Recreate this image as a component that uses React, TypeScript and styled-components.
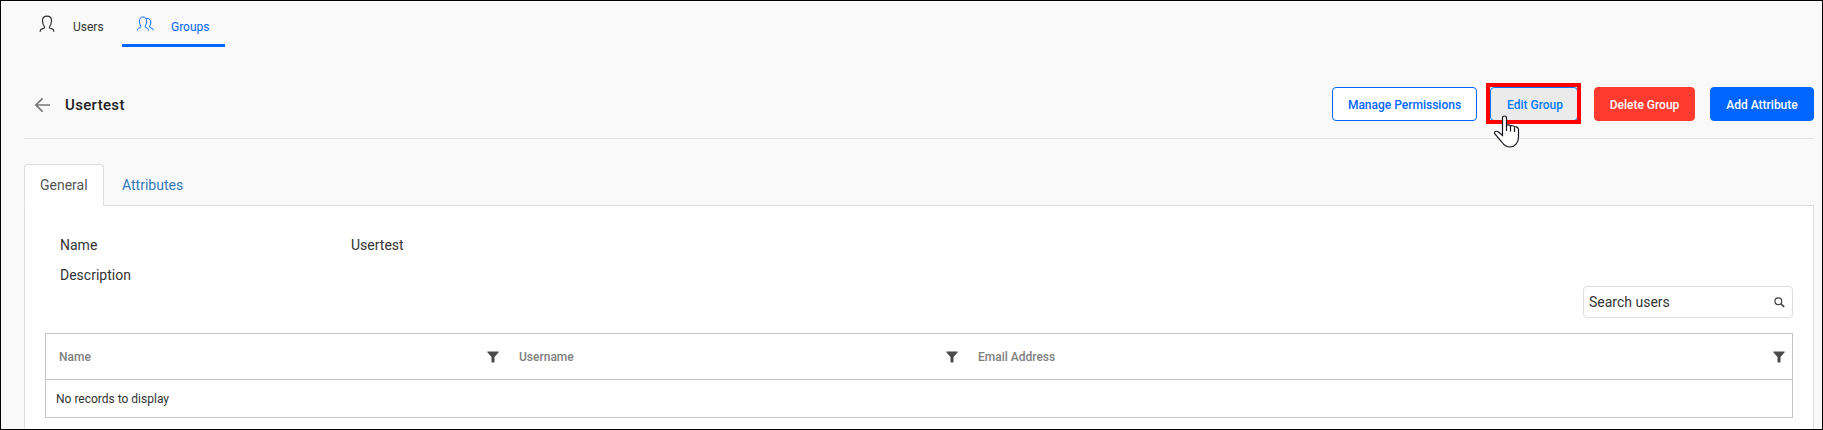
import React from 'react';
import styled, { createGlobalStyle, css } from 'styled-components';

const GlobalStyle = createGlobalStyle`
  *, *::before, *::after { box-sizing: border-box; }
  body { margin: 0; font-family: Roboto, "Liberation Sans", sans-serif; color: #333; }
`;

const Page = styled.div`
  height: 430px;
  overflow: hidden;
  border: 1px solid #000;
  background: #f9f9f9;
  padding: 0 8px 0 23px;
  display: flex;
  flex-direction: column;
`;

const TopNav = styled.nav`
  display: flex;
  height: 46px;
  flex: none;
`;

const NavItem = styled.a<{ $active?: boolean }>`
  display: flex;
  align-items: center;
  height: 46px;
  font-size: 12px;
  line-height: 16px;
  color: ${p => (p.$active ? '#0066ff' : '#333')};
  border-bottom: 3px solid ${p => (p.$active ? '#0066ff' : 'transparent')};
  width: ${p => (p.$active ? '103px' : '98px')};
  padding: 9px 0 0 15px;

  svg { margin: -6px ${p => (p.$active ? '17px' : '18px')} 0 0; flex: none; }
`;

const Header = styled.header`
  display: flex;
  align-items: center;
  height: 92px;
  flex: none;
  padding: 22px 0 0 10px;
  border-bottom: 1px solid #e0e0e0;

  > svg { flex: none; margin-top: 3px; }
`;

const Title = styled.h1`
  margin: 2px auto 0 14px;
  font-size: 15px;
  line-height: 20px;
  font-weight: 500;
  letter-spacing: 0.35px;
  color: #222;
`;

const variants = {
  outline: css`background: #fff; color: #0066ff; border-color: #0066ff;`,
  hover: css`background: #ebebeb; color: #007bff; border-color: #007bff;`,
  danger: css`background: #ff3b30; color: #fff; border-color: #ff3b30;`,
  primary: css`background: #0066ff; color: #fff; border-color: #0066ff;`,
};

const Button = styled.button<{ $variant: keyof typeof variants; $width: number }>`
  font: 500 12px/16px Roboto, "Liberation Sans", sans-serif;
  flex: none;
  width: ${p => p.$width}px;
  height: 34px;
  margin: 4px 0 0;
  padding: 2px 0 0;
  border: 1px solid;
  border-radius: 4px;
  white-space: nowrap;
  ${p => variants[p.$variant]}
`;

const Actions = styled.div`
  display: flex;
  align-items: flex-start;
  gap: 13px;
  height: 41px;

  > :last-child { margin-left: 2px; }
`;

const Highlight = styled.div`
  position: relative;
  display: flex;
  height: 41px;
  width: 95px;
  margin: 0 0 0 -4px;

  &::after {
    content: '';
    position: absolute;
    inset: 0;
    border: 4px solid #ff0000;
  }

  > button { margin: 4px 0 0 4px; padding-left: 2px; }
`;

const Cursor = styled.svg`
  position: absolute;
  z-index: 1;
  left: 7px;
  top: 32px;
`;

const Tabs = styled.div`
  display: flex;
  flex: none;
  margin-top: 25px;
  height: 42px;
  border-bottom: 1px solid #ddd;
`;

const Tab = styled.a<{ $active?: boolean }>`
  height: 42px;
  padding: 10px 15px 0;
  font-size: 14px;
  line-height: 20px;
  border: 1px solid transparent;
  border-radius: 4px 4px 0 0;
  color: #337ab7;
  margin-right: 2px;
  ${p =>
    p.$active &&
    css`
      width: 80px;
      color: #555;
      background: #fff;
      border-color: #ddd #ddd #fff;
    `}
`;

const Panel = styled.section`
  flex: 1;
  background: #fff;
  border: solid #ddd;
  border-width: 0 1px;
  padding: 24px 20px 0;
`;

const Field = styled.div`
  display: grid;
  grid-template-columns: 291px 1fr;
  height: 30px;
  padding: 5px 0 0 15px;
  font-size: 14px;
  line-height: 20px;
`;

const SearchBox = styled.label`
  display: flex;
  align-items: center;
  justify-content: space-between;
  width: 210px;
  height: 32px;
  margin: -4px 0 15px auto;
  padding: 0 7px 0 5px;
  border: 1px solid #ddd;
  border-radius: 4px;
  background: #fff;
  font-size: 14px;
`;

const Table = styled.div`
  border: 1px solid #c4c4c4;
  height: 85px;
`;

const HeadRow = styled.div`
  display: grid;
  grid-template-columns: 460px 459px 1fr;
  height: 46px;
  border-bottom: 1px solid #c4c4c4;
`;

const HeadCell = styled.div`
  display: flex;
  align-items: center;
  justify-content: space-between;
  padding: 1px 7px 0 13px;
  font-size: 12px;
  font-weight: 500;
  color: #808080;
`;

const EmptyRow = styled.div`
  padding: 11px 10px 0;
  font-size: 12px;
  line-height: 16px;
`;

const PersonIcon = () => (
  <svg width="16" height="18" viewBox="0 0 16 18" fill="none" stroke="currentColor" strokeWidth="1.2">
    <path d="M1.200 16.800V16c0-1.200.6-1.700 1.800-2.100l1.900-.6c.6-.2.9-.7.6-1.300C4.200 10 3.500 8 3.500 5.700 3.500 3 5 1.200 8 1.200s4.500 1.800 4.500 4.500c0 2.300-.7 4.300-2 6.300-.3.6 0 1.100.6 1.300l1.900.6c1.200.4 1.800.9 1.800 2.100v.8" />
  </svg>
);

const PeopleIcon = () => (
  <svg width="17" height="16" viewBox="0 0 17 16" fill="none" stroke="currentColor" strokeWidth="1">
    <path d="M.6 14.500v-.7c0-1 .5-1.400 1.500-1.800l1.300-.5c.6-.2.7-.7.4-1.200C2.900 8.900 2.400 7 2.400 5.200 2.400 2.700 3.800 1 6 1s3.700 1.700 3.700 4.200c0 1.800-.6 3.700-1.500 5.100-.3.5-.1 1 .4 1.200l1.300.5c1 .4 1.500.8 1.500 1.800v.7" />
    <path d="M8.900 2.600c.5-.2.9-.2 1.300-.2 2.300 0 3.700 1.400 3.700 3.600 0 1.600-.5 3-1.300 4.300-.3.5-.1.900.4 1.200l1.600.6c1 .4 1.500.8 1.500 1.800v.6" />
  </svg>
);

const BackIcon = () => (
  <svg width="17" height="16" viewBox="0 0 17 16" fill="none" stroke="#777" strokeWidth="1.700">
    <path d="M16 8H2.300M8.600 1.300 1.900 8l6.700 6.700" />
  </svg>
);

const FilterIcon = () => (
  <svg width="12" height="12" viewBox="0 0 12 12">
    <path d="M.3.5h11.400v.7L7.500 6v5.600h-3V6L.3 1.200z" fill="#4a4a4a" />
  </svg>
);

const SearchIcon = () => (
  <svg width="11" height="11" viewBox="0 0 11 11" fill="none" stroke="#444">
    <circle cx="4.300" cy="4.300" r="3.400" strokeWidth="1.200" />
    <path d="m6.900 6.900 3.300 3" strokeWidth="1.700" />
  </svg>
);

const HandCursor = () => (
  <Cursor width="28" height="34" viewBox="0 0 28 34">
    <path
      d="M9.500 20.500V3c0-1.300.8-2 2-2s2 .7 2 2v7.500c.5-1 3.500-.9 4 .7.700-.8 3.300-.6 4 .8 1-.6 4 .1 4 2.500V22c0 5.800-3.700 10-8.500 10-4.200 0-6.200-2-8.200-5l-6.900-8c-1.400-2.200 1.300-3.600 3.600-2z"
      fill="#fff"
      stroke="#15151f"
      strokeWidth="1.200"
    />
    <path d="M13.500 10v6M17.500 11.500v5M21.500 12.500v4.500" stroke="#15151f" strokeWidth="1.200" />
  </Cursor>
);

export default function App() {
  return (
    <>
      <GlobalStyle />
      <Page>
        <TopNav>
          <NavItem><PersonIcon />Users</NavItem>
          <NavItem $active><PeopleIcon />Groups</NavItem>
        </TopNav>
        <Header>
          <BackIcon />
          <Title>Usertest</Title>
          <Actions>
            <Button $variant="outline" $width={145}>Manage Permissions</Button>
            <Highlight>
              <Button $variant="hover" $width={88}>Edit Group</Button>
              <HandCursor />
            </Highlight>
            <Button $variant="danger" $width={101}>Delete Group</Button>
            <Button $variant="primary" $width={104}>Add Attribute</Button>
          </Actions>
        </Header>
        <Tabs>
          <Tab $active>General</Tab>
          <Tab>Attributes</Tab>
        </Tabs>
        <Panel>
          <Field><span>Name</span><span>Usertest</span></Field>
          <Field><span>Description</span></Field>
          <SearchBox>Search users<SearchIcon /></SearchBox>
          <Table>
            <HeadRow>
              <HeadCell>Name<FilterIcon /></HeadCell>
              <HeadCell>Username<FilterIcon /></HeadCell>
              <HeadCell>Email Address<FilterIcon /></HeadCell>
            </HeadRow>
            <EmptyRow>No records to display</EmptyRow>
          </Table>
        </Panel>
      </Page>
    </>
  );
}
